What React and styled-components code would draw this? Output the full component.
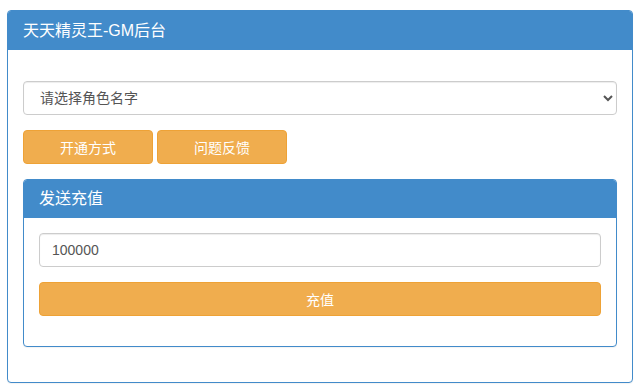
import React from "react";
import styled, { createGlobalStyle } from "styled-components";

const GlobalStyle = createGlobalStyle`
  * { box-sizing: border-box; }
  body {
    margin: 0;
    background: #fff;
    font-family: "Liberation Sans", "Noto Sans CJK SC", sans-serif;
    font-size: 14px;
    color: #333;
  }
`;

const Page = styled.div`
  padding: 10px 11px 8px 7px;
`;

const Panel = styled.section`
  border: 1px solid #428bca;
  border-radius: 4px;
  background: #fff;
  box-shadow: 0 1px 1px rgba(0, 0, 0, 0.05);
  margin-bottom: ${({ $mb }) => $mb || 0}px;
  overflow: hidden;
`;

const PanelHeading = styled.div`
  background: #428bca;
  color: #fff;
  padding: 10px 15px;
  font-size: 16px;
  line-height: ${({ $small }) => ($small ? 18 : 19)}px;
`;

const PanelBody = styled.div`
  padding: ${({ $top }) => $top || 15}px 15px 15px;
`;

const Select = styled.select`
  display: block;
  width: 100%;
  height: 34px;
  padding: 6px 12px;
  font-size: 14px;
  font-family: "Liberation Sans", "Noto Sans CJK SC", sans-serif;
  color: #555;
  background: #fff;
  border: 1px solid #ccc;
  border-radius: 4px;
  box-shadow: inset 0 1px 1px rgba(0, 0, 0, 0.075);
  margin-bottom: 15px;
`;

const Input = styled.input`
  display: block;
  width: 100%;
  height: 34px;
  padding: 6px 12px;
  font-size: 14px;
  font-family: "Liberation Sans", "Noto Sans CJK SC", sans-serif;
  color: #555;
  background: #fff;
  border: 1px solid #ccc;
  border-radius: 4px;
  box-shadow: inset 0 1px 1px rgba(0, 0, 0, 0.075);
  margin-bottom: 15px;
`;

const ButtonRow = styled.div`
  display: flex;
  gap: 4px;
  margin-bottom: 15px;
`;

const Button = styled.button`
  display: block;
  width: ${({ $block }) => ($block ? "100%" : "130px")};
  height: 34px;
  padding: 0;
  margin-bottom: ${({ $block }) => ($block ? 15 : 0)}px;
  border: 1px solid #eea236;
  border-radius: 4px;
  background: #f0ad4e;
  color: #fff;
  font-size: 14px;
  font-family: "Liberation Sans", "Noto Sans CJK SC", sans-serif;
  cursor: pointer;
`;

export default function App() {
  return (
    <>
      <GlobalStyle />
      <Page>
        <Panel>
          <PanelHeading>天天精灵王-GM后台</PanelHeading>
          <PanelBody $top={31}>
            <Select defaultValue="">
              <option value="">请选择角色名字</option>
            </Select>
            <ButtonRow>
              <Button>开通方式</Button>
              <Button>问题反馈</Button>
            </ButtonRow>
            <Panel $mb={20}>
              <PanelHeading $small>发送充值</PanelHeading>
              <PanelBody>
                <Input defaultValue="100000" />
                <Button $block>充值</Button>
              </PanelBody>
            </Panel>
          </PanelBody>
        </Panel>
      </Page>
    </>
  );
}
